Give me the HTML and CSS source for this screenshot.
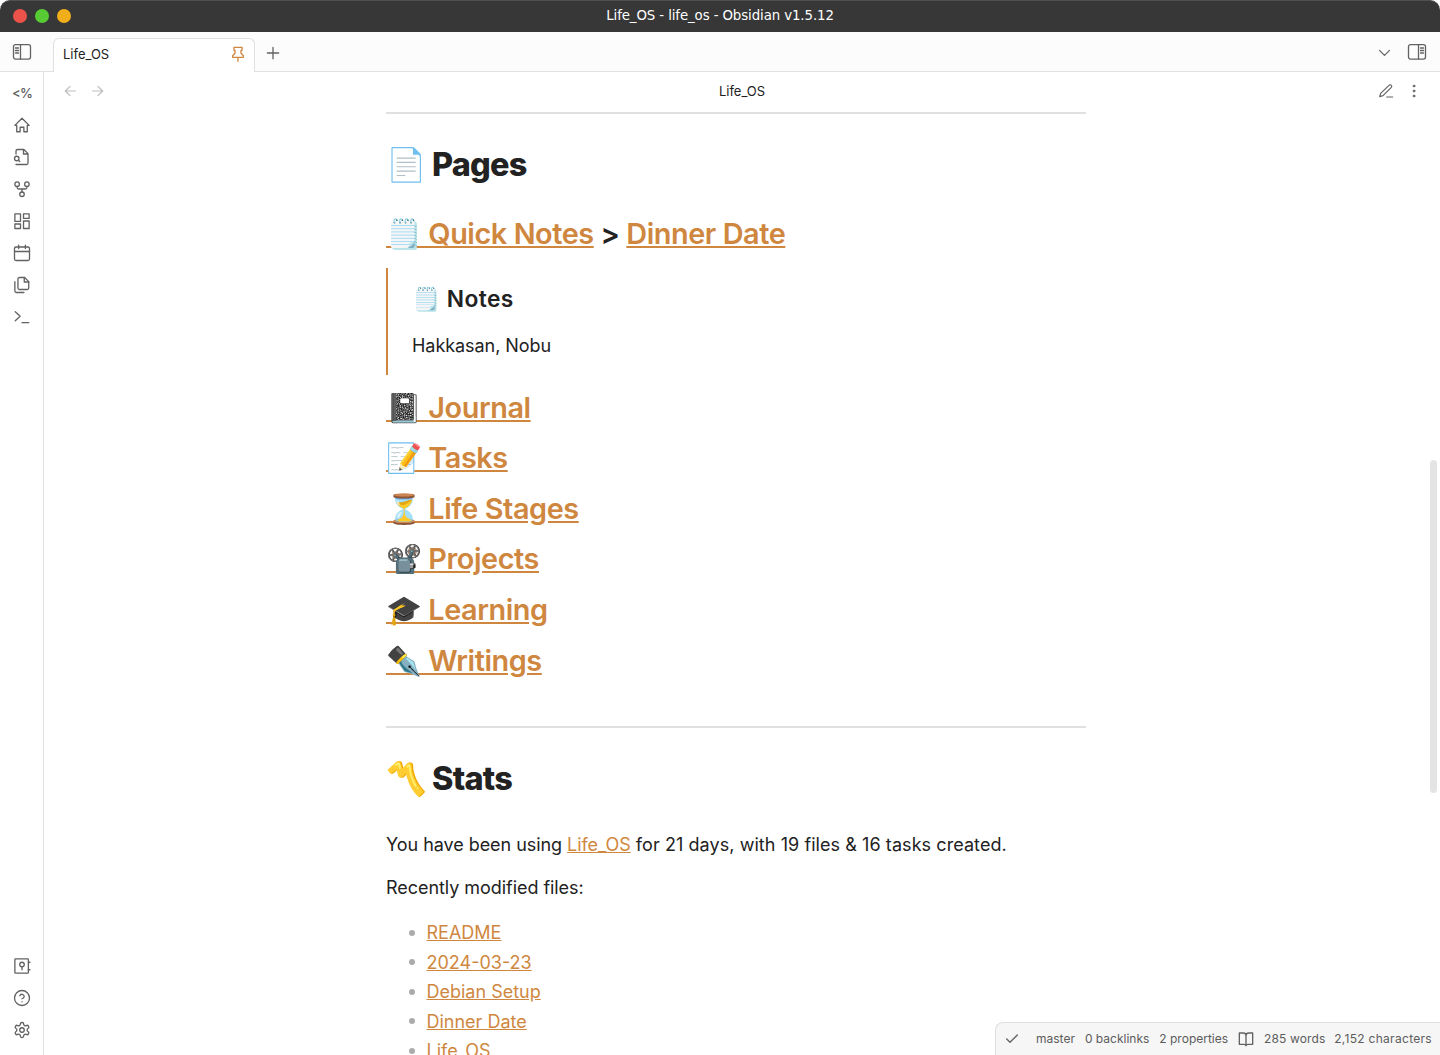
FILE: index.html
```html
<!DOCTYPE html>
<html lang="en">
<head>
<meta charset="utf-8">
<title>Life_OS - life_os - Obsidian v1.5.12</title>
<link rel="stylesheet" href="styles.css">
</head>
<body>
<div class="window">
  <header class="titlebar">
    <div class="lights"><i class="light red"></i><i class="light green"></i><i class="light yellow"></i></div>
    <div class="window-title">Life_OS - life_os - Obsidian v1.5.12</div>
  </header>
  <div class="tabbar">
    <div class="sidebar-toggle"><svg class="icon" viewBox="0 0 20 20"><rect x="1.500" y="2.700" width="17" height="14.400" rx="2"/><path d="M8.500 2.700v14.400M3.500 6h3M3.500 8.500h3M3.500 11h3"/></svg></div>
    <div class="tab"><span>Life_OS</span><svg class="pin" viewBox="0 0 24 24"><path d="M12 17v6M4 17h16v-2.500L16.500 11V6.500H18V2H6v4.500h1.500V11L4 14.500Z"/></svg></div>
    <svg class="icon plus" viewBox="0 0 24 24"><path d="M4.500 12h15M12 4.500v15"/></svg>
    <div class="tab-actions">
      <svg class="icon chevron" viewBox="0 0 24 24"><path d="m5 9 7 7 7-7"/></svg>
      <svg class="icon right-toggle" viewBox="0 0 20 20"><rect x="1.500" y="2.700" width="17" height="14.400" rx="2"/><path d="M11.500 2.700v14.400M13.500 6h3M13.500 8.500h3M13.500 11h3"/></svg>
    </div>
  </div>
  <div class="workspace">
    <nav class="ribbon">
      <div class="ribbon-group">
        <span class="templater">&lt;%</span>
        <svg viewBox="0 0 24 24"><path d="M2.500 12.500 12 3l9.500 9.500H19V21h-4.500v-6h-5v6H5v-8.500Z"/></svg>
        <svg viewBox="0 0 24 24"><path d="M4 8V4a2 2 0 0 1 2-2h8.500L20 7.500V20a2 2 0 0 1-2 2H4M14 2v6h6"/><circle cx="5" cy="14" r="3"/><path d="m9 18-1.700-1.700"/></svg>
        <svg viewBox="0 0 24 24"><circle cx="12" cy="19" r="3"/><circle cx="5.500" cy="5.500" r="3"/><circle cx="18.500" cy="5.500" r="3"/><path d="M5.500 8.500v1.500a2 2 0 0 0 2 2h9a2 2 0 0 0 2-2V8.500M12 12v4"/></svg>
        <svg viewBox="0 0 24 24"><rect x="2.500" y="2.500" width="7.500" height="10"/><rect x="14" y="2.500" width="7.500" height="6"/><rect x="14" y="12" width="7.500" height="10"/><rect x="2.500" y="16" width="7.500" height="6"/></svg>
        <svg viewBox="0 0 24 24"><rect x="2" y="4" width="20" height="18" rx="2"/><path d="M7.500 1.500V6M16.500 1.500V6M2 10h20"/></svg>
        <svg viewBox="0 0 24 24"><path d="M15.500 2H8.600a2 2 0 0 0-2 2v12a2 2 0 0 0 2 2H19a2 2 0 0 0 2-2V7.500Z"/><path d="M15 2v6h6M2.500 7.600V20a2 2 0 0 0 2 2h10"/></svg>
        <svg viewBox="0 0 24 24"><path d="m3 17 6.500-6L3 5M12 19.500h9"/></svg>
      </div>
      <div class="ribbon-group">
        <svg viewBox="0 0 24 24"><rect x="2.500" y="2.500" width="18" height="19" rx="1"/><circle cx="12" cy="10" r="3"/><path d="M12 13v4M20.500 7H22.500M20.500 17H22.500"/></svg>
        <svg viewBox="0 0 24 24"><circle cx="12" cy="12" r="10"/><path d="M9.090 9a3 3 0 0 1 5.830 1c0 2-3 3-3 3M12 17h.01"/></svg>
        <svg viewBox="0 0 24 24"><path d="M12.220 2h-.44a2 2 0 0 0-2 2v.18a2 2 0 0 1-1 1.730l-.43.25a2 2 0 0 1-2 0l-.15-.08a2 2 0 0 0-2.730.73l-.22.38a2 2 0 0 0 .73 2.730l.15.1a2 2 0 0 1 1 1.720v.51a2 2 0 0 1-1 1.740l-.15.09a2 2 0 0 0-.73 2.730l.22.38a2 2 0 0 0 2.730.73l.15-.08a2 2 0 0 1 2 0l.43.25a2 2 0 0 1 1 1.730V20a2 2 0 0 0 2 2h.44a2 2 0 0 0 2-2v-.18a2 2 0 0 1 1-1.730l.43-.25a2 2 0 0 1 2 0l.15.08a2 2 0 0 0 2.730-.73l.22-.39a2 2 0 0 0-.73-2.730l-.15-.08a2 2 0 0 1-1-1.740v-.5a2 2 0 0 1 1-1.740l.15-.09a2 2 0 0 0 .73-2.730l-.22-.38a2 2 0 0 0-2.730-.73l-.15.08a2 2 0 0 1-2 0l-.43-.25a2 2 0 0 1-1-1.730V4a2 2 0 0 0-2-2z"/><circle cx="12" cy="12" r="3"/></svg>
      </div>
    </nav>
    <section class="pane">
      <div class="view-header">
        <div class="nav-buttons">
          <svg class="icon" viewBox="0 0 24 24"><path d="m12 19-7-7 7-7M20 12H5"/></svg>
          <svg class="icon" viewBox="0 0 24 24"><path d="M4 12h15M12 5l7 7-7 7"/></svg>
        </div>
        <div class="view-title">Life_OS</div>
        <div class="view-actions">
          <svg class="icon" viewBox="0 0 24 24"><path d="M13 21h9M16.500 3.500a2.120 2.120 0 0 1 3.500 3L7.500 19l-5 1.500 1.500-5Z"/></svg>
          <svg class="icon dots" viewBox="0 0 24 24"><circle cx="12" cy="4.500" r="1.500"/><circle cx="12" cy="12" r="1.500"/><circle cx="12" cy="19.500" r="1.500"/></svg>
        </div>
      </div>
      <article class="note">
        <hr>
        <h1>📄 Pages</h1>
        <h2 class="quick"><a>🗒️ Quick Notes</a> &gt; <a>Dinner Date</a></h2>
        <div class="embed">
          <h3>🗒️ Notes</h3>
          <p>Hakkasan, Nobu</p>
        </div>
        <div class="links">
          <h2><a>📓 Journal</a></h2>
          <h2><a>📝 Tasks</a></h2>
          <h2><a>⏳ Life Stages</a></h2>
          <h2><a>📽️ Projects</a></h2>
          <h2><a>🎓 Learning</a></h2>
          <h2><a>✒️ Writings</a></h2>
        </div>
        <hr>
        <h1>〽️ Stats</h1>
        <p class="summary">You have been using <a>Life_OS</a><span class="counts"> for 21 days, with 19 files &amp; 16 tasks created.</span></p>
        <p class="recent">Recently modified files:</p>
        <ul>
          <li><a>README</a></li>
          <li><a>2024-03-23</a></li>
          <li><a>Debian Setup</a></li>
          <li><a>Dinner Date</a></li>
          <li><a>Life_OS</a></li>
        </ul>
      </article>
    </section>
  </div>
  <div class="scroll-thumb"></div>
  <footer class="status">
    <svg class="check" viewBox="0 0 24 24"><path d="M20 6 9 17l-5-5"/></svg>
    <span class="s-master">master</span><span class="s-back">0 backlinks</span><span class="s-prop">2 properties</span>
    <svg class="book" viewBox="0 0 24 24"><path d="M2 3h6a4 4 0 0 1 4 4v15a3 3 0 0 0-3-2H2ZM22 3h-6a4 4 0 0 0-4 4v15a3 3 0 0 1 3-2h7Z"/></svg>
    <span class="s-words">285 words</span><span class="s-chars">2,152 characters</span>
  </footer>
</div>
</body>
</html>
```
FILE: styles.css
```css
* { box-sizing: border-box; }
body { margin: 0; background: #fff; color: #222; font-family: Inter, "Noto Color Emoji", sans-serif; overflow: hidden; }
.window { height: 1055px; position: relative; display: flex; flex-direction: column; overflow: hidden; }
svg { fill: none; stroke: #626262; stroke-width: 1.750; stroke-linecap: round; stroke-linejoin: round; display: block; }
.icon { width: 18px; height: 18px; flex: none; }

.titlebar { height: 32px; flex: none; display: grid; grid-template-columns: 1fr auto 1fr; align-items: start; background: #373737; border-top: 1px solid #505050; border-radius: 10px 10px 0 0; }
.lights { display: flex; gap: 8px; padding: 8px 0 0 13px; }
.light { width: 14px; height: 14px; border-radius: 50%; }
.red { background: #ea524a; }
.green { background: #57cb33; }
.yellow { background: #f1ae1b; }
.window-title { font: 13.330px/29px "DejaVu Sans", sans-serif; letter-spacing: -.1px; color: #fff; }

.tabbar { height: 40px; flex: none; display: flex; align-items: flex-start; background: #fcfcfc; border-bottom: 1px solid #e0e0e0; }
.sidebar-toggle { width: 53px; padding: 10px 0 0 12px; }
.sidebar-toggle svg, .right-toggle { width: 20px; height: 20px; stroke-width: 1.300; }
.tab { width: 202px; height: 34px; margin-top: 6px; padding: 0 8px 3px 9px; display: flex; align-items: center; justify-content: space-between; border: 1px solid #e0e0e0; border-bottom: 0; border-radius: 6px 6px 0 0; background: #fff; font-size: 13px; }
.pin { width: 16px; height: 16px; stroke: #cf8740; stroke-width: 2; }
.plus { margin: 12px 0 0 9px; }
.tab-actions { margin-left: auto; display: flex; gap: 14px; padding: 10px 13px 0 0; }
.chevron { margin-top: 2px; width: 17px; height: 17px; }

.workspace { flex: 1; min-height: 0; display: flex; }
.ribbon { width: 44px; flex: none; border-right: 1px solid #e0e0e0; display: flex; flex-direction: column; justify-content: space-between; padding: 12px 0 16px 13px; }
.ribbon-group { display: flex; flex-direction: column; gap: 14px; }
.ribbon svg { width: 18px; height: 18px; }
.templater { height: 18px; margin-left: -1px; font: 500 13px/18px Inter, sans-serif; letter-spacing: -.8px; color: #5c5c5c; }
.pane { flex: 1; min-width: 0; display: flex; flex-direction: column; }
.view-header { height: 40px; flex: none; display: grid; grid-template-columns: 1fr auto 1fr; align-items: center; padding: 0 18px 2px; }
.nav-buttons { display: flex; gap: 12px; }
.nav-buttons svg, .view-actions svg { width: 16px; height: 16px; }
.nav-buttons svg { stroke: #bdbdbd; }
.view-title { font-size: 13px; line-height: 36px; }
.view-actions { display: flex; justify-content: flex-end; gap: 12px; }
.dots circle { fill: #5c5c5c; stroke-width: 1; }

.note { width: 700px; margin-left: 342px; font-size: 18px; line-height: 27px; flex: 1; min-height: 0; overflow: hidden; }
.note hr { height: 2px; margin: 0; border: 0; background: #e0e0e0; }
.note a { color: #cf8740; text-decoration: underline; }
.note h1 { margin: 31px 0 0; font-size: 32.440px; line-height: 40px; height: 40px; font-weight: 800; letter-spacing: -.023em; }
.note h2 { margin: 0; font-size: 28.840px; line-height: 34px; height: 34px; font-weight: 600; letter-spacing: -.015em; }
.note h2.quick { margin-top: 32px; }
.embed { height: 107px; margin-top: 17px; padding: 17px 0 0 24px; border-left: 2px solid #cf8740; }
.note h3 { margin: 0; font-size: 22.800px; line-height: 28px; height: 28px; font-weight: 600; letter-spacing: .35px; }
.note p { margin: 0; height: 27px; letter-spacing: -.05px; }
.counts { letter-spacing: .07px; }
.embed p { margin-top: 19px; }
.links { display: flex; flex-direction: column; gap: 16.600px; margin: 15.600px 0 48.400px; }
.note p.summary { margin-top: 32.500px; }
.note p.recent { margin-top: 16px; }
.note ul { margin: 16.300px 0 0; padding: 0 0 0 23px; list-style: none; }
.note li { display: flex; align-items: center; height: 29.600px; }
.note li::before { content: ""; width: 6px; height: 6px; margin-right: 11.500px; border-radius: 50%; background: #ababab; }

.scroll-thumb { position: absolute; left: 1430px; top: 460px; width: 7px; height: 333px; border-radius: 4px; background: #e4e4e4; }
.status { position: absolute; right: 0; bottom: 0; width: 445px; height: 33px; display: flex; align-items: center; padding: 0 8px 1px 8px; background: #f6f6f6; border: 1px solid #e0e0e0; border-width: 1px 0 0 1px; border-radius: 8px 0 0 0; font-size: 12px; color: #5c5c5c; white-space: nowrap; }
.status svg { width: 16px; height: 16px; flex: none; stroke-width: 2; }
.check { margin-right: 16px; }
.s-back, .s-prop, .book, .s-words { margin-left: 10px; }
.s-words { letter-spacing: .12px; }
.s-chars { margin-left: auto; letter-spacing: .3px; }
```
